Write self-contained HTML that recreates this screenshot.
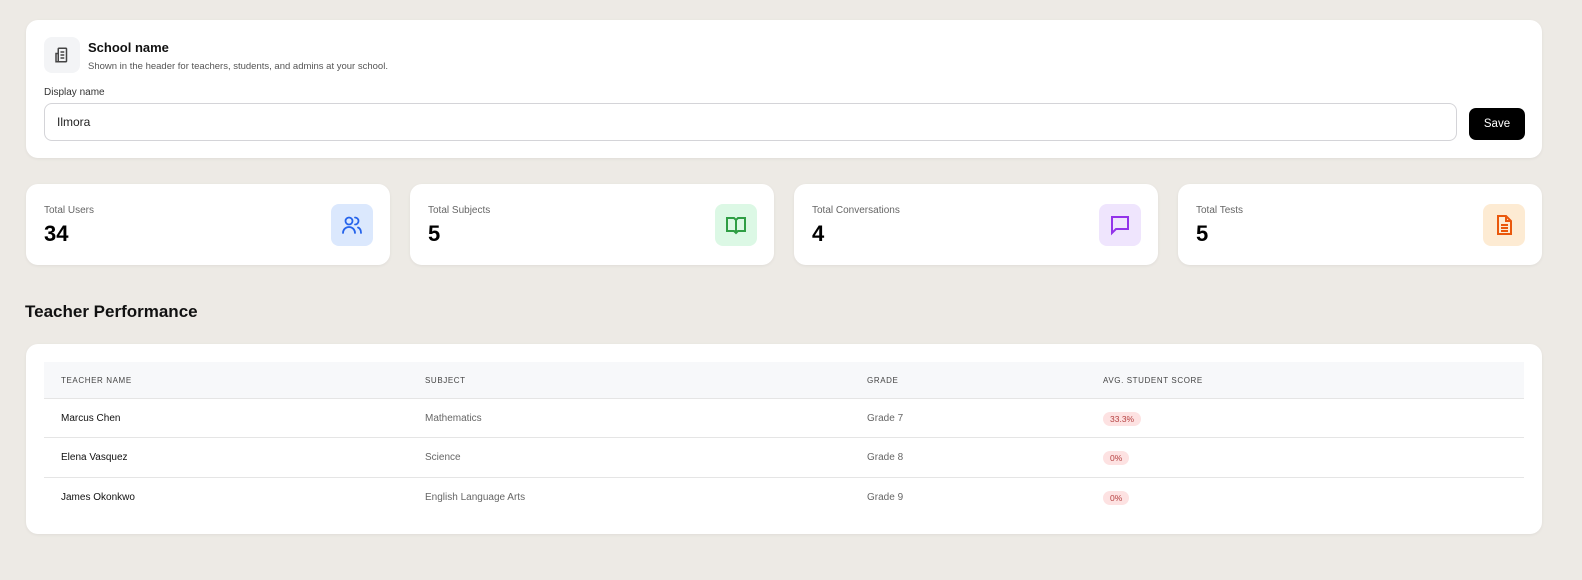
<!DOCTYPE html>
<html><head><style>
*{box-sizing:border-box;margin:0;padding:0}
body{width:1582px;height:580px;background:#edeae5;font-family:"Liberation Sans",sans-serif;position:relative;overflow:hidden;color:#111}
.card{position:absolute;background:#fff;border-radius:12px;box-shadow:0 1px 3px rgba(0,0,0,.06)}
.abs{position:absolute}
.lab{font-size:10px;color:#666}
.num{font-size:22px;font-weight:bold;color:#000}
.ic{position:absolute;width:42px;height:42px;border-radius:8px;display:flex;align-items:center;justify-content:center}
th,td{text-align:left;font-weight:normal}
.row{position:absolute;left:18px;width:1480px;height:40px;border-top:1px solid #e5e5e5;font-size:10px}
.row span{position:absolute;top:14px}
.pill{background:#fde2e2;color:#b54040;border-radius:8px;padding:2px 7px;font-size:8.5px;top:13px!important}
</style></head><body>
<div class="card" style="left:26px;top:20px;width:1516px;height:138px">
  <div class="ic" style="left:18px;top:17px;width:36px;height:36px;background:#f3f4f6">
    <svg width="18" height="18" viewBox="0 0 24 24" fill="none" stroke="#444" stroke-width="2"><rect x="7" y="3" width="11" height="18" rx="1"/><path d="M4 10h3v11H4zM10 8h5M10 12h5M10 16h5"/></svg>
  </div>
  <div class="abs" style="left:62px;top:20px;font-size:13px;font-weight:bold">School name</div>
  <div class="abs" style="left:62px;top:41px;font-size:9.5px;color:#555">Shown in the header for teachers, students, and admins at your school.</div>
  <div class="abs" style="left:18px;top:67px;font-size:10px;color:#333">Display name</div>
  <div class="abs" style="left:18px;top:83px;width:1413px;height:38px;border:1px solid #d4d4d8;border-radius:8px;font-size:12px;padding:11px 12px;color:#222">Ilmora</div>
  <div class="abs" style="left:1443px;top:88px;width:56px;height:32px;background:#000;border-radius:7px;color:#fff;font-size:11.5px;text-align:center;line-height:32px">Save</div>
</div>

<div class="card" style="left:26px;top:184px;width:364px;height:81px"><div class="abs lab" style="left:18px;top:21px">Total Users</div><div class="abs num" style="left:18px;top:37px">34</div>
<div class="ic" style="left:305px;top:20px;background:#dbe8fd"><svg width="24" height="24" viewBox="0 0 24 24" fill="none" stroke="#2563eb" stroke-width="1.8" stroke-linecap="round"><circle cx="9" cy="8" r="3.5"/><path d="M3 20c0-3.5 2.7-6 6-6s6 2.5 6 6M15 4.5a3.5 3.5 0 0 1 0 7M18 14.5c2 .8 3 2.8 3 5.5"/></svg></div></div>
<div class="card" style="left:410px;top:184px;width:364px;height:81px"><div class="abs lab" style="left:18px;top:21px">Total Subjects</div><div class="abs num" style="left:18px;top:37px">5</div>
<div class="ic" style="left:305px;top:20px;background:#dcf8e5"><svg width="24" height="24" viewBox="0 0 24 24" fill="none" stroke="#2f9e44" stroke-width="2"><path d="M3 5h7l2 2 2-2h7v13h-7l-2 2-2-2H3zM12 7v13"/></svg></div></div>
<div class="card" style="left:794px;top:184px;width:364px;height:81px"><div class="abs lab" style="left:18px;top:21px">Total Conversations</div><div class="abs num" style="left:18px;top:37px">4</div>
<div class="ic" style="left:305px;top:20px;background:#efe5fd"><svg width="24" height="24" viewBox="0 0 24 24" fill="none" stroke="#9333ea" stroke-width="2"><path d="M4 4h16v12H8l-4 4z"/></svg></div></div>
<div class="card" style="left:1178px;top:184px;width:364px;height:81px"><div class="abs lab" style="left:18px;top:21px">Total Tests</div><div class="abs num" style="left:18px;top:37px">5</div>
<div class="ic" style="left:305px;top:20px;background:#fdebd3"><svg width="24" height="24" viewBox="0 0 24 24" fill="none" stroke="#ea580c" stroke-width="2"><path d="M6 3h8l5 5v13H6zM14 3v5h5M9 12h7M9 15h7M9 18h7"/></svg></div></div>

<div class="abs" style="left:25px;top:302px;font-size:17px;font-weight:bold">Teacher Performance</div>

<div class="card" style="left:26px;top:344px;width:1516px;height:190px">
  <div class="abs" style="left:18px;top:18px;width:1480px;height:36px;background:#f7f8fa;font-size:8px;color:#444;letter-spacing:.6px">
    <span class="abs" style="left:17px;top:14px">TEACHER NAME</span>
    <span class="abs" style="left:381px;top:14px">SUBJECT</span>
    <span class="abs" style="left:823px;top:14px">GRADE</span>
    <span class="abs" style="left:1059px;top:14px">AVG. STUDENT SCORE</span>
  </div>
  <div class="row" style="top:54px"><span style="left:17px">Marcus Chen</span><span style="left:381px;color:#666">Mathematics</span><span style="left:823px;color:#666">Grade 7</span><span class="pill" style="left:1059px">33.3%</span></div>
  <div class="row" style="top:93px"><span style="left:17px">Elena Vasquez</span><span style="left:381px;color:#666">Science</span><span style="left:823px;color:#666">Grade 8</span><span class="pill" style="left:1059px">0%</span></div>
  <div class="row" style="top:133px"><span style="left:17px">James Okonkwo</span><span style="left:381px;color:#666">English Language Arts</span><span style="left:823px;color:#666">Grade 9</span><span class="pill" style="left:1059px">0%</span></div>
</div>
</body></html>
